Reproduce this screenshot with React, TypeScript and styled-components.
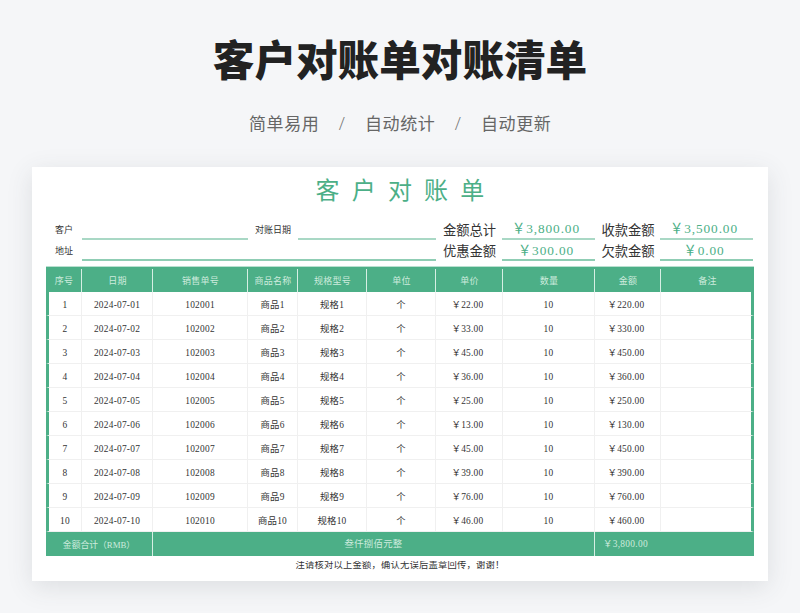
import React from "react";
import styled, { createGlobalStyle } from "styled-components";

const COLS = "36px 71px 95px 50px 69px 69px 67px 92px 66px 93px";
const GREEN = "#4caf87";
const CJK = `"Liberation Serif", "Noto Sans CJK SC", serif`;

const Global = createGlobalStyle`
  html, body { margin: 0; padding: 0; background: #f5f6f8; }
  body { width: 800px; height: 613px; overflow: hidden; font-family: "Noto Sans CJK SC", sans-serif; }
`;
const Page = styled.div`
  display: flex; flex-direction: column; align-items: center; height: 613px; padding-top: 37px; box-sizing: border-box;
`;
const Heading = styled.h1`
  margin: 0; font-size: 41.6px; line-height: 42px; font-weight: 900; color: #222; font-family: "Noto Sans CJK SC", sans-serif;
`;
const Tagline = styled.div`
  margin-top: 32px; height: 24px; display: flex; align-items: center; gap: 0; font-size: 17px; line-height: 24px; color: #666; letter-spacing: 0.6px;
`;
const TagItem = styled.span`width: 70px; white-space: nowrap;`;
const TagSlash = styled.span`width: 46px; text-align: center; font-size: 18px; font-weight: 300; font-family: "Open Sans", sans-serif; color: #777;`;
const Sheet = styled.section`
  margin-top: 32px; width: 736px; height: 414px; box-sizing: border-box; padding: 0 14px; background: #fff; overflow: hidden;
  box-shadow: 0 6px 24px rgba(60, 70, 80, 0.13);
`;
const SheetTitle = styled.h2`
  margin: 0 0 7px; height: 44px; font-size: 24px; line-height: 44px; font-weight: 400; text-align: center; color: ${GREEN}; letter-spacing: 12.2px; padding-left: 12px;
`;
const InfoRow = styled.div<{ $h: number; $line: string }>`
  display: grid; grid-template-columns: ${COLS}; height: ${p => p.$h}px; color: #333;
  --line: ${p => p.$line};
`;
const InfoLabel = styled.div<{ $big?: boolean }>`
  display: flex; align-items: center; justify-content: center; font-size: ${p => (p.$big ? "13.3px" : "9px")}; white-space: nowrap; color: #333;
`;
const InfoBlank = styled.div<{ $span: number }>`
  grid-column: span ${p => p.$span}; border-bottom: 2px solid var(--line);
`;
const InfoValue = styled.div<{ $end?: boolean }>`
  display: flex; align-items: center; justify-content: center; border-bottom: 2px solid var(--line); color: ${GREEN}; white-space: nowrap;
  font: 13.3px/1 ${CJK}; letter-spacing: 0.9px; margin-right: ${p => (p.$end ? "1px" : "0")}; margin-left: -1px;
  padding: 2px 5px 0 0; box-sizing: border-box;
`;
const Table = styled.div`
  margin-top: 5px; border-top: 1px solid #b9e0d0; font: 9.4px/1 ${CJK}; color: #333; letter-spacing: 0.25px;
`;
const HeadRow = styled.div`
  display: grid; grid-template-columns: ${COLS}; height: 25px; background: ${GREEN};
`;
const HeadCell = styled.div`
  display: flex; align-items: center; justify-content: center; color: #cdebdd; padding-top: 1px; box-sizing: border-box;
  font-family: "Noto Sans CJK SC", serif; font-size: 9px; letter-spacing: 0.2px;
  &:not(:last-child) { position: relative; }
  &:not(:last-child)::after { content: ""; position: absolute; right: 0; top: 2px; bottom: 0; width: 1px; background: #d6efe4; }
`;
const Row = styled.div`
  display: grid; grid-template-columns: ${COLS}; height: 24px; background: #fff;
`;
const Cell = styled.div<{ $money?: boolean }>`
  display: flex; align-items: center; justify-content: center; box-sizing: border-box; white-space: nowrap;
  padding: 4px ${p => (p.$money ? "3px" : "0")} 0 0;
  border-right: 1px solid #f0f0f0; border-bottom: 1px solid #f0f0f0;
  &:first-child { border-left: 3px solid ${GREEN}; }
  &:last-child { border-right: 3px solid ${GREEN}; }
`;
const FootRow = styled.div`
  display: grid; grid-template-columns: 107px 442px 159px; height: 24px; background: ${GREEN}; color: #cdebdd;
`;
const FootCell = styled.div<{ $left?: boolean }>`
  display: flex; align-items: center; justify-content: ${p => (p.$left ? "flex-start" : "center")}; padding: 2px 0 0 ${p => (p.$left ? "8px" : "0")};
  box-sizing: border-box; font-size: 9.4px; letter-spacing: 0.3px;
  &:not(:last-child) { border-right: 1px solid #d6efe4; }
`;
const FootSum = styled(FootCell)`
  font-size: 8.8px; letter-spacing: 0;
`;
const Note = styled.div`
  height: 9px; margin-top: 5px; overflow: hidden; text-align: center; font: 9.3px/9px ${CJK}; letter-spacing: 0.2px; color: #333; white-space: nowrap;
`;

const HEADS = ["序号", "日期", "销售单号", "商品名称", "规格型号", "单位", "单价", "数量", "金额", "备注"];
const PRICES = [22, 33, 45, 36, 25, 13, 45, 39, 76, 46];

export default function App() {
  return (
    <Page>
      <Global />
      <Heading>客户对账单对账清单</Heading>
      <Tagline>
        <TagItem>简单易用</TagItem>
        <TagSlash>/</TagSlash>
        <TagItem>自动统计</TagItem>
        <TagSlash>/</TagSlash>
        <TagItem>自动更新</TagItem>
      </Tagline>
      <Sheet>
        <SheetTitle>客户对账单</SheetTitle>
        <InfoRow $h={22} $line="#a9d8c5">
          <InfoLabel>客户</InfoLabel>
          <InfoBlank $span={2} />
          <InfoLabel>对账日期</InfoLabel>
          <InfoBlank $span={2} />
          <InfoLabel $big>金额总计</InfoLabel>
          <InfoValue>￥3,800.00</InfoValue>
          <InfoLabel $big>收款金额</InfoLabel>
          <InfoValue $end>￥3,500.00</InfoValue>
        </InfoRow>
        <InfoRow $h={21} $line="#8fcdb4">
          <InfoLabel>地址</InfoLabel>
          <InfoBlank $span={5} />
          <InfoLabel $big>优惠金额</InfoLabel>
          <InfoValue>￥300.00</InfoValue>
          <InfoLabel $big>欠款金额</InfoLabel>
          <InfoValue $end>￥0.00</InfoValue>
        </InfoRow>
        <Table>
          <HeadRow>
            {HEADS.map(h => <HeadCell key={h}>{h}</HeadCell>)}
          </HeadRow>
          {PRICES.map((p, i) => {
            const n = i + 1;
            return (
              <Row key={n}>
                <Cell>{n}</Cell>
                <Cell>{`2024-07-${String(n).padStart(2, "0")}`}</Cell>
                <Cell>{102000 + n}</Cell>
                <Cell>{`商品${n}`}</Cell>
                <Cell>{`规格${n}`}</Cell>
                <Cell>个</Cell>
                <Cell $money>{`￥${p}.00`}</Cell>
                <Cell>10</Cell>
                <Cell $money>{`￥${p * 10}.00`}</Cell>
                <Cell />
              </Row>
            );
          })}
          <FootRow>
            <FootSum>金额合计（RMB）</FootSum>
            <FootCell>叁仟捌佰元整</FootCell>
            <FootCell $left>￥3,800.00</FootCell>
          </FootRow>
        </Table>
        <Note>注请核对以上金额，确认无误后盖章回传，谢谢！</Note>
      </Sheet>
    </Page>
  );
}
